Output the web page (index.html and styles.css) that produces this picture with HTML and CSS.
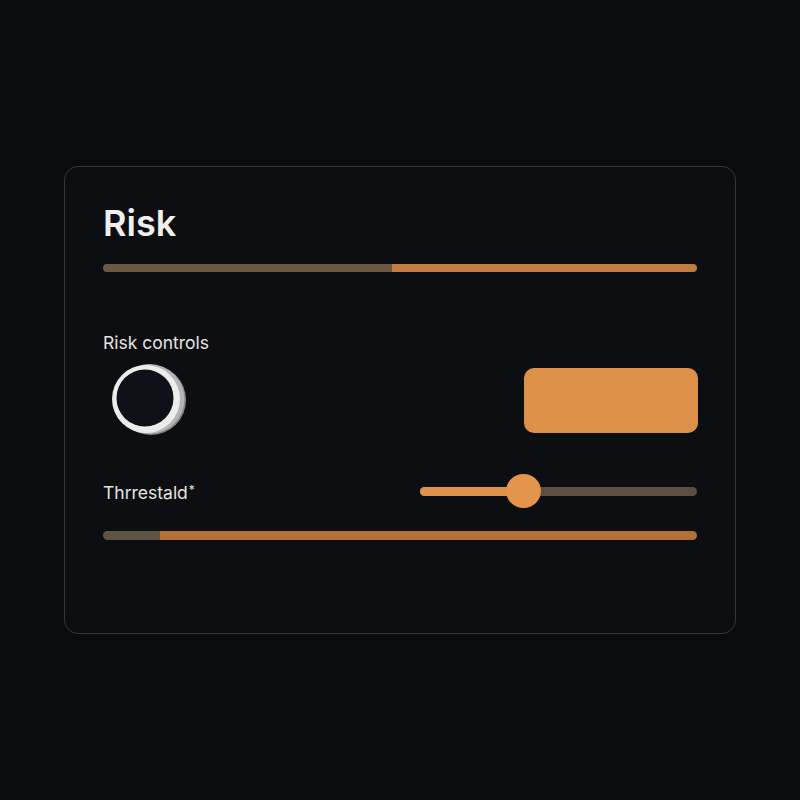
FILE: index.html
```html
<!DOCTYPE html>
<html>
<head>
<meta charset="utf-8">
<link rel="stylesheet" href="styles.css">
</head>
<body>
<div class="card">
  <h1 class="title">Risk</h1>
  <div class="bar bar-top"><div class="seg seg-muted" style="width:48.6%"></div><div class="seg seg-fill"></div></div>
  <div class="label label-controls">Risk controls</div>
  <div class="control-row">
    <svg class="toggle" width="76" height="76" viewBox="0 0 76 76">
      <circle cx="40" cy="38" r="35" fill="#858585"/>
      <circle cx="38.5" cy="37" r="35" fill="#b4b4b4"/>
      <circle cx="35" cy="37" r="34" fill="#ececec"/>
      <circle cx="34" cy="36" r="28.5" fill="#0e1117"/>
    </svg>
    <div class="action"></div>
  </div>
  <div class="slider-row">
    <div class="label">Thrrestald<span class="mark">*</span></div>
    <div class="slider">
      <div class="track"><div class="track-fill" style="width:36%"></div></div>
      <div class="thumb" style="left:36%"></div>
    </div>
  </div>
  <div class="bar bar-bottom"><div class="seg seg-muted2" style="width:9.6%"></div><div class="seg seg-fill2"></div></div>
</div>
</body>
</html>
```
FILE: styles.css
```css
html, body {
  margin: 0;
  padding: 0;
  background: #0b0c0f;
  width: 800px;
  height: 800px;
  font-family: Inter, "Noto Sans", sans-serif;
}
body {
  padding-top: 166px;
  box-sizing: border-box;
}
.card {
  margin-left: 64px;
  width: 672px;
  box-sizing: border-box;
  border: 1px solid #34373d;
  border-radius: 14px;
  background: #0c0e12;
  padding: 36px 38px 93px 38px;
  display: flex;
  flex-direction: column;
}
.title {
  margin: 0;
  font-size: 36px;
  line-height: 40px;
  font-weight: 600;
  color: #f1efec;
  letter-spacing: 0;
}
.bar {
  display: flex;
  border-radius: 5px;
  overflow: hidden;
}
.bar-top {
  margin-top: 21px;
  height: 8px;
}
.bar-bottom {
  margin-top: 23px;
  height: 9px;
}
.seg { height: 100%; }
.seg-muted { background: #6a5843; }
.seg-fill { flex: 1; background: #c27c40; }
.seg-muted2 { background: #5f5342; }
.seg-fill2 { flex: 1; background: #b2703a; }
.label {
  font-size: 17.5px;
  line-height: 20px;
  color: #e6e4e1;
  letter-spacing: 0;
}
.mark {
  font-size: 12px;
  vertical-align: 5px;
  margin-left: 1px;
}
.label-controls {
  margin-top: 61px;
}
.control-row {
  margin-top: 10px;
  height: 74px;
  display: flex;
  align-items: center;
  justify-content: space-between;
}
.toggle {
  display: block;
  margin-left: 8px;
}
.action {
  width: 174px;
  height: 65px;
  border-radius: 10px;
  background: #dd9148;
  margin-right: -1px;
}
.slider-row {
  margin-top: 37px;
  height: 34px;
  display: flex;
  align-items: center;
  justify-content: space-between;
}
.slider {
  position: relative;
  width: 277px;
  height: 34px;
  display: flex;
  align-items: center;
}
.track {
  width: 100%;
  height: 9px;
  border-radius: 5px;
  background: #5d4f3e;
  overflow: hidden;
}
.track-fill {
  height: 100%;
  background: #e0924a;
}
.thumb {
  position: absolute;
  top: 0;
  width: 35px;
  height: 34px;
  margin-left: -14px;
  border-radius: 50%;
  background: #e2954b;
}
```
